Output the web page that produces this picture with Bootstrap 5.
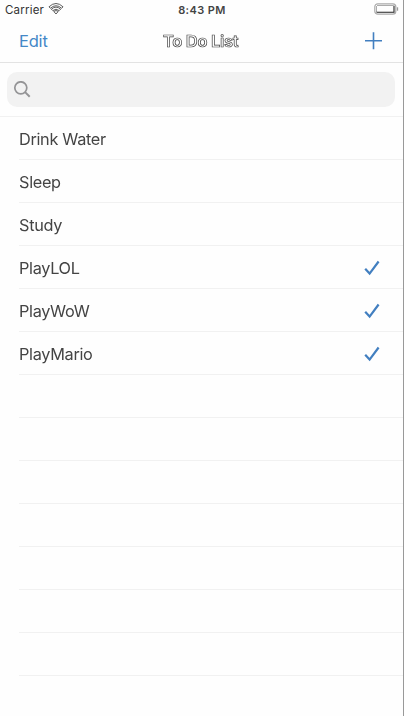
<!DOCTYPE html>
<html lang="en">
<head>
<meta charset="utf-8">
<meta name="viewport" content="width=device-width, initial-scale=1">
<title>To Do List</title>
<link href="https://cdn.jsdelivr.net/npm/bootstrap@5.3.0/dist/css/bootstrap.min.css" rel="stylesheet">
<style>
body{font-family:Inter,"Liberation Sans",sans-serif;background:#fefefe;color:#333}
.phone{height:716px;border-right:1px solid #999}
.status{height:20px;font-size:11.5px;line-height:20px;padding:0 4px 0 5px}
.status>*,.topbar>*{flex:1 1 0}
.carrier{letter-spacing:.2px}
.clock{font-weight:600;font-size:11px;letter-spacing:.4px;color:#444}
.battery{padding-bottom:2px}
.topbar{height:43px;border-bottom:1px solid #e3e3e3;padding:0 20px 0 19px;line-height:42px}
.edit{color:#4488c7;font-size:16.5px;letter-spacing:-.2px}
.heading{font-size:16.5px;font-weight:600;letter-spacing:-.3px;color:#fff;-webkit-text-stroke:.7px #444;will-change:transform;white-space:nowrap}
.searchbar{height:54px;padding:9px 8px 9px 7px;border-bottom:1px solid #f1f1f1}
.field{height:35px;background:#f2f2f2;border-radius:10px;padding-left:6px}
.todo{will-change:transform}
.todo .list-group-item{height:43px;margin-left:19px;padding:1px 22px 0 0;border:0;border-bottom:1px solid #f1f1f1;background:transparent;color:#444;font-size:16.3px;letter-spacing:-.32px;line-height:42px}
svg{display:block;fill:none}
</style>
<script src="https://cdn.jsdelivr.net/npm/bootstrap@5.3.0/dist/js/bootstrap.bundle.min.js"></script>
</head>
<body>
<svg width="0" height="0" class="position-absolute"><symbol id="check" viewBox="0 0 18 18"><path d="M2.2 9.8 6.6 14.6 15.6 2.5" stroke="#427fc0" stroke-width="2.2"/></symbol></svg>
<main class="phone overflow-hidden">
  <div class="status d-flex align-items-center">
    <div class="carrier d-flex align-items-center"><span>Carrier</span>
      <svg class="ms-1 mb-1" width="16" height="13" viewBox="0 0 16 13" stroke="#333" stroke-width=".8"><path d="M1 4.8Q8-1.8 15 4.8L13.6 6.3Q8 1.2 2.4 6.3ZM3.4 7.2Q8 3 12.6 7.2L11.2 8.6Q8 5.8 4.8 8.6ZM5.8 9.5Q8 7.5 10.2 9.5L8 12Z"/></svg>
    </div>
    <div class="clock text-center">8:43 PM</div>
    <div class="battery d-flex justify-content-end">
      <svg width="25" height="12" viewBox="0 0 25 12"><rect x=".8" y=".8" width="21" height="10.4" rx="3" stroke="#aaa" stroke-width="1.2"/><path d="M3 2.5H19.5M2.5 3V9" stroke="#888" stroke-width=".7"/><path d="M2.5 9.3H20V2.8" stroke="#222" stroke-width="1.1"/><path d="M23.5 4.3V7.7" stroke="#999" stroke-width="1.3"/></svg>
    </div>
  </div>
  <header class="topbar d-flex align-items-center">
    <div class="edit">Edit</div>
    <div class="heading text-center">To Do List</div>
    <div class="d-flex justify-content-end"><svg width="19" height="19" viewBox="0 0 19 19" stroke="#427fc0" stroke-width="1.6"><path d="M9.5 .3V17.3M1 8.8H18"/></svg></div>
  </header>
  <div class="searchbar"><div class="field d-flex align-items-center"><svg width="18" height="18" viewBox="0 0 18 18" stroke="#949496" stroke-width="1.7"><circle cx="7.8" cy="6.8" r="6"/><path d="M12.1 11.1 16.7 15.7" stroke-width="2"/></svg></div></div>
  <ul class="todo list-group list-group-flush">
    <li class="list-group-item">Drink Water</li>
    <li class="list-group-item">Sleep</li>
    <li class="list-group-item">Study</li>
    <li class="list-group-item d-flex justify-content-between align-items-center">PlayLOL<svg width="18" height="18"><use href="#check"/></svg></li>
    <li class="list-group-item d-flex justify-content-between align-items-center">PlayWoW<svg width="18" height="18"><use href="#check"/></svg></li>
    <li class="list-group-item d-flex justify-content-between align-items-center">PlayMario<svg width="18" height="18"><use href="#check"/></svg></li>
    <li class="list-group-item"></li><li class="list-group-item"></li><li class="list-group-item"></li><li class="list-group-item"></li><li class="list-group-item"></li><li class="list-group-item"></li><li class="list-group-item"></li>
    <li class="list-group-item border-0"></li>
  </ul>
</main>
</body>
</html>
